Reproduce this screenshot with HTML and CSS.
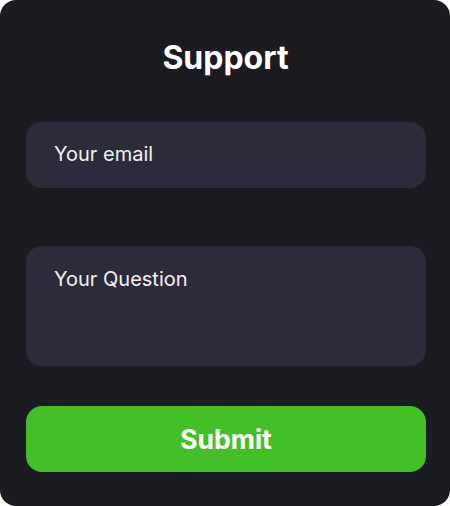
FILE: index.html
```html
<!DOCTYPE html>
<html lang="en">
<head>
<meta charset="utf-8">
<title>Support</title>
<link rel="stylesheet" href="styles.css">
</head>
<body>
<form class="card">
  <h1 class="title">Support</h1>
  <input class="field field-email" type="email" placeholder="Your email">
  <textarea class="field field-question" placeholder="Your Question"></textarea>
  <button class="submit" type="button">Submit</button>
</form>
</body>
</html>
```
FILE: styles.css
```css
html, body {
  margin: 0;
  padding: 0;
  background: #ffffff;
}
body {
  font-family: Inter, "Noto Sans", sans-serif;
}
.card {
  box-sizing: border-box;
  width: 450px;
  height: 506px;
  background: #1b1b22;
  border-radius: 16px;
  padding: 38px 24px 34px 26px;
  display: flex;
  flex-direction: column;
}
.title {
  margin: 0;
  font-size: 32px;
  font-weight: 700;
  line-height: 39px;
  color: #ffffff;
  text-align: center;
  padding-right: 1px;
}
.field {
  box-sizing: border-box;
  width: 400px;
  border: none;
  outline: none;
  background: #2c2b3a;
  border-radius: 16px;
  color: #f2f2f5;
  font-family: Inter, "Noto Sans", sans-serif;
  font-size: 20px;
  padding: 0 28px;
  margin: 0;
  display: block;
}
.field::placeholder {
  color: #f2f2f5;
  opacity: 1;
}
.field-email {
  height: 66px;
  margin-top: 45px;
  padding-bottom: 2px;
}
.field-question {
  height: 120px;
  margin-top: 58px;
  padding-top: 21px;
  resize: none;
  line-height: 24px;
}
.submit {
  box-sizing: border-box;
  width: 400px;
  height: 66px;
  margin-top: 40px;
  border: none;
  border-radius: 16px;
  background: #43c027;
  color: #ffffff;
  font-family: Inter, "Noto Sans", sans-serif;
  font-size: 26.5px;
  font-weight: 700;
  padding: 0;
}
```
